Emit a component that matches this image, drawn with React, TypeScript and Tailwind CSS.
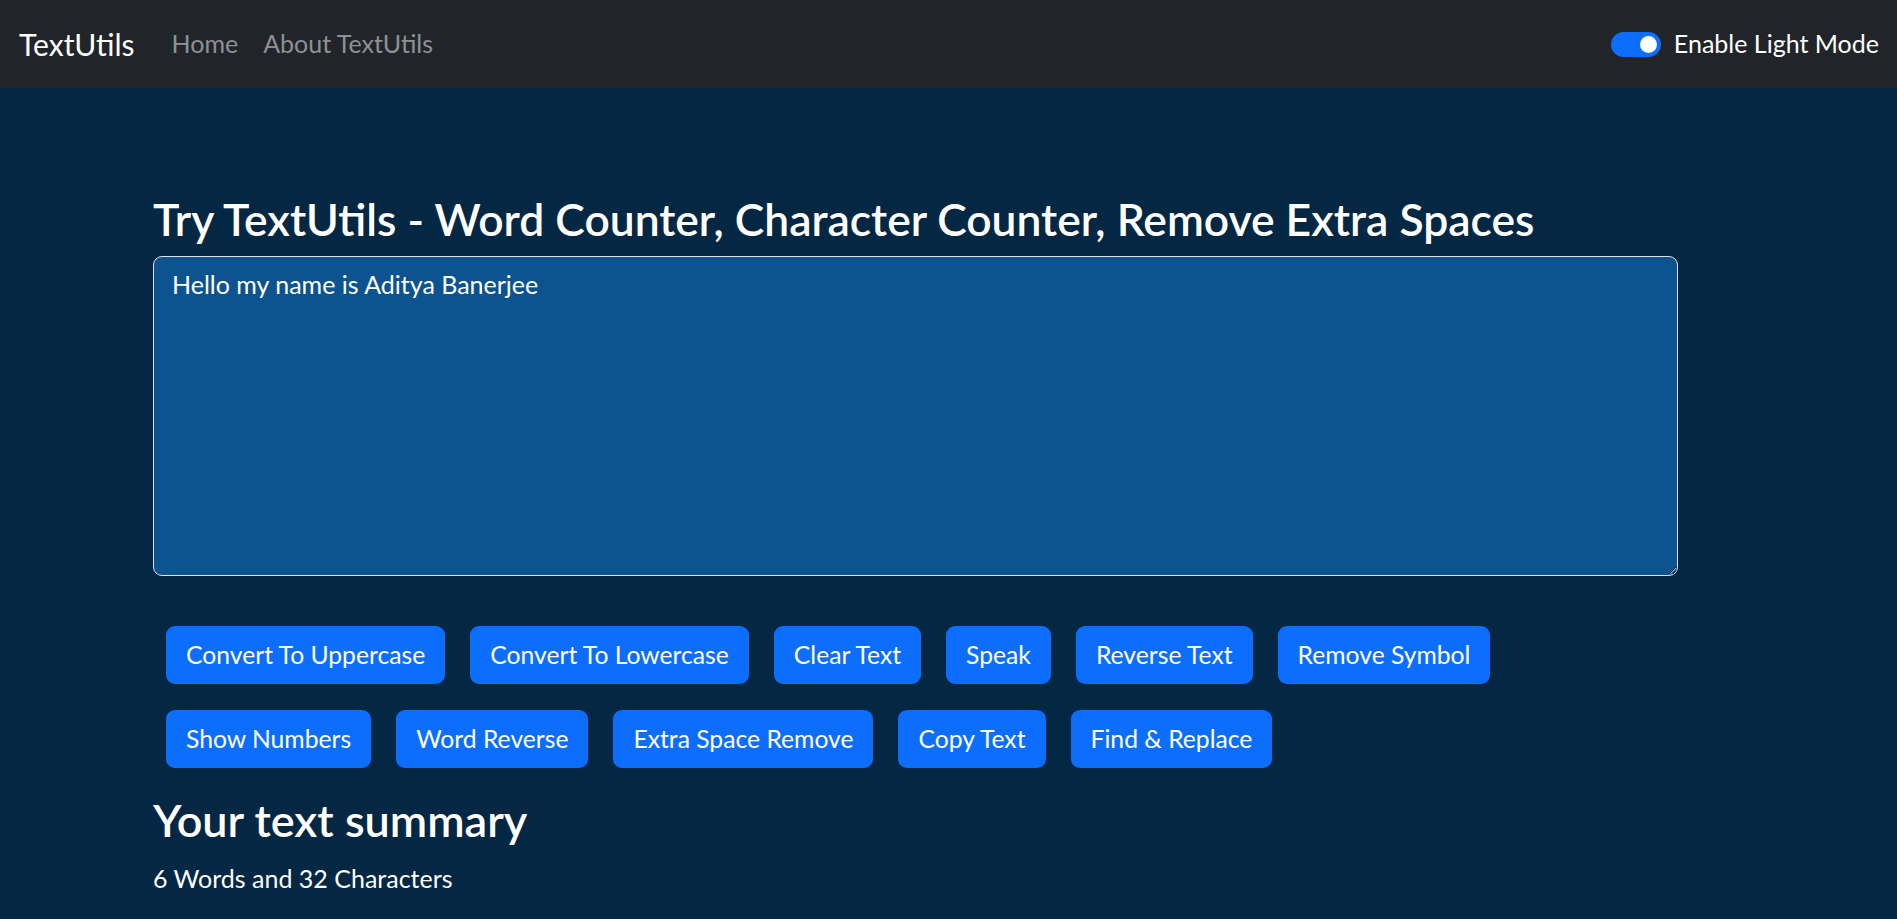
import React, { useState } from 'react';

const row1 = ['Convert To Uppercase', 'Convert To Lowercase', 'Clear Text', 'Speak', 'Reverse Text', 'Remove Symbol'];
const row2 = ['Show Numbers', 'Word Reverse', 'Extra Space Remove', 'Copy Text', 'Find & Replace'];

function Btn({ label }: { label: string }) {
  return (
    <button className="h-[58px] px-[20px] rounded-[9px] bg-[#0d6efd] text-white text-[24.7px] leading-[36px] whitespace-nowrap">
      {label}
    </button>
  );
}

export default function App() {
  const [text, setText] = useState('Hello my name is Aditya Banerjee');
  const words = text.split(/\s+/).filter(w => w.length > 0).length;

  return (
    <div className="min-h-screen bg-[#042743] font-['Lato',sans-serif] text-white">
      <nav className="h-[88px] bg-[#212529] flex items-center pl-[19px] pr-[18px]">
        <span className="text-[30px] leading-[45px]">TextUtils</span>
        <a className="ml-[37px] text-[25px] text-[#8e9194]">Home</a>
        <a className="ml-[25px] text-[25px] text-[#8e9194]">About TextUtils</a>
        <div className="ml-auto flex items-center gap-[13px]">
          <div className="w-[50px] h-[25px] rounded-full bg-[#0d6efd] flex items-center justify-end pr-[4px]">
            <div className="w-[17px] h-[17px] rounded-full bg-white" />
          </div>
          <span className="text-[25px]">Enable Light Mode</span>
        </div>
      </nav>

      <main className="pl-[153px] pt-[104px]">
        <h1 className="text-[44.4px] leading-[1.2] font-semibold mb-[11px]">
          Try TextUtils - Word Counter, Character Counter, Remove Extra Spaces
        </h1>
        <textarea
          value={text}
          onChange={e => setText(e.target.value)}
          className="block w-[1525px] h-[320px] bg-[#0c5390] text-white text-[25px] leading-[36px] px-[18px] py-[9px] border border-[#dee2e6] rounded-[9px] outline-none"
        />

        <div className="pl-[13px] mt-[50px] flex flex-col gap-[26px]">
          <div className="flex gap-[25px]">
            {row1.map(b => <Btn key={b} label={b} />)}
          </div>
          <div className="flex gap-[25px]">
            {row2.map(b => <Btn key={b} label={b} />)}
          </div>
        </div>

        <h2 className="mt-[25px] text-[45px] leading-[1.2] font-semibold">Your text summary</h2>
        <p className="mt-[13px] text-[25px] leading-[36px]">
          {words} Words and {text.length} Characters
        </p>
      </main>
    </div>
  );
}
